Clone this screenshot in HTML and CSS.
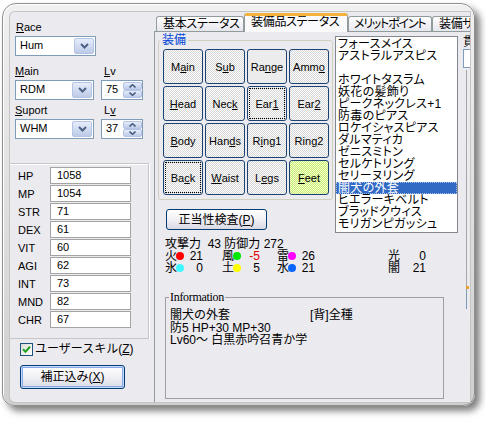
FILE: index.html
```html
<!DOCTYPE html>
<html lang="ja">
<head>
<meta charset="utf-8">
<title>Equip</title>
<link rel="stylesheet" href="styles.css">
</head>
<body>
<div class="window">
 <div class="client">
  <div class="side">
   <div class="lbl l1"><u>R</u>ace</div>
   <div class="combo race"><span class="val">Hum</span><span class="ddb"><svg width="9" height="6" viewBox="0 0 9 6"><path d="M1 1 L4.5 4.5 L8 1" fill="none" stroke="#4d6185" stroke-width="2"/></svg></span></div>
   <div class="lblrow m9"><span class="lbl a"><u>M</u>ain</span><span class="lbl"><u>L</u>v</span></div>
   <div class="ctlrow">
    <div class="combo job"><span class="val">RDM</span><span class="ddb"><svg width="9" height="6" viewBox="0 0 9 6"><path d="M1 1 L4.5 4.5 L8 1" fill="none" stroke="#4d6185" stroke-width="2"/></svg></span></div>
    <div class="spin"><span class="val">75</span><span class="spinbtns"><span><svg width="7" height="4" viewBox="0 0 7 4"><path d="M0.5 3.5 L3.5 0.7 L6.5 3.5" fill="none" stroke="#4d6185" stroke-width="1.6"/></svg></span><span><svg width="7" height="4" viewBox="0 0 7 4"><path d="M0.5 0.5 L3.5 3.3 L6.5 0.5" fill="none" stroke="#4d6185" stroke-width="1.6"/></svg></span></span></div>
   </div>
   <div class="lblrow m4"><span class="lbl a"><u>S</u>uport</span><span class="lbl">L<u>v</u></span></div>
   <div class="ctlrow">
    <div class="combo job"><span class="val">WHM</span><span class="ddb"><svg width="9" height="6" viewBox="0 0 9 6"><path d="M1 1 L4.5 4.5 L8 1" fill="none" stroke="#4d6185" stroke-width="2"/></svg></span></div>
    <div class="spin"><span class="val">37</span><span class="spinbtns"><span><svg width="7" height="4" viewBox="0 0 7 4"><path d="M0.5 3.5 L3.5 0.7 L6.5 3.5" fill="none" stroke="#4d6185" stroke-width="1.6"/></svg></span><span><svg width="7" height="4" viewBox="0 0 7 4"><path d="M0.5 0.5 L3.5 3.3 L6.5 0.5" fill="none" stroke="#4d6185" stroke-width="1.6"/></svg></span></span></div>
   </div>
   <div class="stats">
    <div class="srow"><span class="sl">HP</span><span class="sv">1058</span></div>
    <div class="srow"><span class="sl">MP</span><span class="sv">1054</span></div>
    <div class="srow"><span class="sl">STR</span><span class="sv">71</span></div>
    <div class="srow"><span class="sl">DEX</span><span class="sv">61</span></div>
    <div class="srow"><span class="sl">VIT</span><span class="sv">60</span></div>
    <div class="srow"><span class="sl">AGI</span><span class="sv">62</span></div>
    <div class="srow"><span class="sl">INT</span><span class="sv">73</span></div>
    <div class="srow"><span class="sl">MND</span><span class="sv">82</span></div>
    <div class="srow"><span class="sl">CHR</span><span class="sv">67</span></div>
   </div>
   <div class="chk"><span class="box"><svg width="9" height="9" viewBox="0 0 9 9"><path d="M1 4.2 L3.5 6.7 L8 1.8" fill="none" stroke="#21a121" stroke-width="2"/></svg></span><span>ユーザースキル(<u>Z</u>)</span></div>
   <button class="xpbtn def">補正込み(<u>X</u>)</button>
  </div>
  <div class="tabarea">
   <div class="tabs">
    <div class="tab t1">基本ステータス</div>
    <div class="tab sel">装備品ステータス</div>
    <div class="tab t3">メリットポイント</div>
    <div class="tab t4">装備サマリー</div>
   </div>
   <div class="panel">
    <div class="pmain">
     <div class="toprow">
      <div class="eqcol">
       <fieldset class="eq">
        <legend>装備</legend>
        <div class="grid">
         <div class="eb">M<u>a</u>in</div>
         <div class="eb">S<u>u</u>b</div>
         <div class="eb plain">Ra<u>n</u>ge</div>
         <div class="eb">Amm<u>o</u></div>
         <div class="eb"><u>H</u>ead</div>
         <div class="eb">Nec<u>k</u></div>
         <div class="eb focus">Ear<u>1</u></div>
         <div class="eb">Ear<u>2</u></div>
         <div class="eb"><u>B</u>ody</div>
         <div class="eb">Han<u>d</u>s</div>
         <div class="eb">R<u>i</u>ng1</div>
         <div class="eb">Rin<u>g</u>2</div>
         <div class="eb focus">Ba<u>c</u>k</div>
         <div class="eb"><u>W</u>aist</div>
         <div class="eb">L<u>e</u>gs</div>
         <div class="eb feet"><u>F</u>eet</div>
        </div>
       </fieldset>
       <button class="xpbtn chkbtn">正当性検査(<u>P</u>)</button>
      </div>
      <div class="list">
       <div>フォースメイス</div>
       <div>アストラルアスピス</div>
       <div></div>
       <div>ホワイトタスラム</div>
       <div>妖花の髪飾り</div>
       <div>ピークネックレス+1</div>
       <div>防毒のピアス</div>
       <div>ロケイシャスピアス</div>
       <div>ダルマティカ</div>
       <div>ゼニスミトン</div>
       <div>セルケトリング</div>
       <div>セリーヌリング</div>
       <div class="s">闇犬の外套</div>
       <div>ヒエラーキベルト</div>
       <div>ブラッドクウィス</div>
       <div>モリガンピガッシュ</div>
      </div>
     </div>
     <div class="atk">攻撃力  43 防御力 272</div>
     <div class="elems">
      <div class="el"><span class="k">火</span><span class="d fire"></span><span class="n">21</span></div>
      <div class="el"><span class="k">風</span><span class="d wind"></span><span class="n neg">-5</span></div>
      <div class="el"><span class="k">雷</span><span class="d thun"></span><span class="n">26</span></div>
      <div class="el"><span class="k">光</span><span class="d light"></span><span class="n">0</span></div>
      <div class="el"><span class="k">氷</span><span class="d ice"></span><span class="n">0</span></div>
      <div class="el"><span class="k">土</span><span class="d earth"></span><span class="n">5</span></div>
      <div class="el"><span class="k">水</span><span class="d water"></span><span class="n">21</span></div>
      <div class="el"><span class="k">闇</span><span class="d dark"></span><span class="n">21</span></div>
     </div>
     <fieldset class="info">
      <legend>Information</legend>
      <div class="infobody">
       <div class="r1"><span class="nm">闇犬の外套</span><span>[背]全種</span></div>
       <div>防5 HP+30 MP+30</div>
       <div>Lv60～ 白黒赤吟召青か学</div>
      </div>
     </fieldset>
    </div>
    <div class="pside">
     <div class="plbl">貫</div>
     <div class="ptxt"></div>
     <div class="pline"></div>
     <div class="pmark"></div>
     <div class="pblue"></div>
    </div>
   </div>
  </div>
 </div>
</div>
</body>
</html>
```

FILE: styles.css
```css
* { box-sizing: border-box; }
html, body { margin: 0; padding: 0; background: #fff; }
body {
  font-family: "Liberation Sans", "Noto Sans CJK JP", sans-serif;
  font-size: 11px;
  color: #000;
  width: 486px;
  height: 422px;
  overflow: hidden;
}
u { text-decoration: underline; text-underline-offset: 1px; }

.window {
  width: 473px;
  height: 403px;
  margin: 3px 0 0 2px;
  border: 1px solid #8f8f8f;
  border-radius: 14px 14px 12px 12px;
  padding: 8px 4px 3px 7px;
  background: linear-gradient(#f0f0f0, #cfcfcf);
  box-shadow: 5px 5px 7px rgba(0, 0, 0, 0.5), inset 1px 1px 0 #fff;
}
.client {
  display: flex;
  width: 460px;
  height: 390px;
  background: #ebeaef;
  border-radius: 5px 0 0 5px;
  overflow: hidden;
  box-shadow: 0 0 0 1px #c4c4c4;
}

/* left side */
.side {
  width: 144px;
  flex: none;
  padding: 9px 0 0 5px;
  display: flex;
  flex-direction: column;
  align-items: flex-start;
}
.lbl { line-height: 13px; height: 13px; }
.l1 { margin-left: 1px; }
.combo {
  margin-top: 2px;
  height: 20px;
  border: 1px solid #7f9db9;
  background: #fff;
  display: flex;
}
.combo .val { flex: 1; padding-left: 4px; line-height: 17px; }
.race { width: 81px; }
.job { width: 79px; }
.ddb {
  width: 20px;
  margin: 1px;
  border: 1px solid #b4c4e4;
  border-radius: 2px;
  background: linear-gradient(#e6edfb, #bdcbe8);
  display: flex;
  align-items: center;
  justify-content: center;
}
.lblrow { display: flex; }
.lblrow .a { width: 89px; }
.m9 { margin-top: 9px; }
.m4 { margin-top: 4px; }
.ctlrow { display: flex; gap: 7px; margin-top: 2px; }
.ctlrow .combo { margin-top: 0; }
.spin {
  width: 42px;
  height: 20px;
  border: 1px solid #7f9db9;
  background: #fff;
  display: flex;
}
.spin .val { flex: 1; padding-left: 4px; line-height: 17px; }
.spinbtns {
  width: 19px;
  margin: 1px 0;
  display: flex;
  flex-direction: column;
}
.spinbtns span {
  flex: 1;
  border: 1px solid #b4c4e4;
  border-radius: 2px;
  background: linear-gradient(#e6edfb, #bdcbe8);
  display: flex;
  align-items: center;
  justify-content: center;
}

.stats {
  margin: 24px 0 0 -5px;
  width: 139px;
  border: 1px solid #c6c5ca;
  border-left: 0;
  padding: 3px 0 10px 0;
  box-shadow: inset 0 1px 0 #fff, 1px 0 0 #fff;
}
.srow { display: flex; height: 17px; align-items: center; }
.srow + .srow { margin-top: 1px; }
.sl { width: 40px; padding-left: 8px; }
.sv {
  width: 81px;
  height: 17px;
  border: 1px solid #a3a3a3;
  background: #fff;
  padding-left: 6px;
  line-height: 15px;
}

.chk {
  display: flex;
  align-items: center;
  margin: 4px 0 0 5px;
  height: 13px;
  font-size: 12px;
  line-height: 13px;
}
.box {
  width: 13px;
  height: 13px;
  border: 1px solid #1c5180;
  background: linear-gradient(135deg, #dcdcd7, #fff);
  margin-right: 2px;
  display: flex;
  align-items: center;
  justify-content: center;
}

.xpbtn {
  font-family: "Liberation Sans", "Noto Sans CJK JP", sans-serif;
  font-size: 12px;
  color: #000;
  border: 1px solid #003c74;
  border-radius: 3px;
  background: linear-gradient(#ffffff 0%, #f2f2f6 45%, #d9dae4 100%);
  padding: 0;
  line-height: 12px;
}
.def {
  margin: 9px 0 0 5px;
  width: 105px;
  height: 24px;
  box-shadow: inset 0 0 0 1px #c6d9fb, inset 0 0 0 2px #88a9e8;
}

/* tab area */
.tabarea {
  flex: 1;
  display: flex;
  flex-direction: column;
  min-width: 0;
}
.tabs {
  height: 19px;
  display: flex;
  align-items: flex-end;
  padding-left: 2px;
  flex: none;
}
.tab {
  height: 15px;
  border: 1px solid #919b9c;
  border-bottom: 0;
  border-radius: 3px 3px 0 0;
  background: linear-gradient(#ffffff, #e6e6ee);
  font-size: 12px;
  line-height: 14px;
  padding-left: 6px;
  white-space: nowrap;
  overflow: hidden;
  flex: none;
  font-feature-settings: "palt";
  letter-spacing: -0.3px;
}
.t1 { width: 88px; }
.t3 { width: 84px; padding-left: 5px; letter-spacing: -1.2px; }
.t4 { width: 60px; }
.tab.sel {
  width: 104px;
  height: 19px;
  margin-bottom: -1px;
  border-top: 3px solid #f5b33c;
  background: #fafafc;
  position: relative;
  z-index: 1;
  line-height: 13px;
}

.panel {
  flex: 1;
  border-top: 1px solid #919b9c;
  border-left: 1px solid #919b9c;
  display: flex;
  min-height: 0;
}
.pmain {
  width: 303px;
  flex: none;
  display: flex;
  flex-direction: column;
}
.toprow { display: flex; align-items: flex-start; }
.eqcol { display: flex; flex-direction: column; align-items: flex-start; }

fieldset.eq {
  margin: 2px 0 0 3px;
  padding: 3px 3px 4px 4px;
  border: 1px solid #d0d0bf;
  border-radius: 3px;
  min-width: 0;
}
fieldset.eq legend {
  padding: 0 2px;
  margin-left: -3px;
  color: #0046d5;
  font-size: 12px;
  line-height: 12px;
}
.grid {
  display: grid;
  grid-template-columns: repeat(4, 40px);
  grid-auto-rows: 35px;
  gap: 2px;
}
.eb {
  border: 1px solid #1a4374;
  border-radius: 3px;
  background: repeating-conic-gradient(#ffffff 0 25%, #d6d6d6 0 50%) 0 0 / 2px 2px;
  display: flex;
  align-items: center;
  justify-content: center;
  font-size: 11px;
}
.eb.plain { background: #ececec; }
.eb.feet { background: repeating-conic-gradient(#f8ffc8 0 25%, #c6ee7a 0 50%) 0 0 / 2px 2px; }
.eb.focus { outline: 1px dotted #000; outline-offset: -3px; }

.chkbtn {
  margin: 9px 0 0 11px;
  width: 101px;
  height: 21px;
}

.list {
  margin: 4px 0 0 2px;
  width: 123px;
  height: 197px;
  border: 1px solid #828790;
  background: #fff;
  padding-top: 1px;
  font-size: 12px;
  line-height: 12px;
  overflow: hidden;
  flex: none;
}
.list div { height: 12px; padding-left: 2px; white-space: nowrap; font-feature-settings: "palt"; letter-spacing: 0.3px; }
.list .s { background: #316ac5; color: #fff; outline: 1px dotted #a9c0ea; outline-offset: -1px; }

.atk {
  margin: 5px 0 0 10px;
  font-size: 12px;
  line-height: 12px;
  white-space: pre;
}
.elems {
  margin-left: 10px;
  display: grid;
  grid-template-columns: 57px 55px 111px 40px;
  grid-auto-rows: 12px;
  font-size: 12px;
  line-height: 12px;
}
.el { display: flex; align-items: center; }
.el .k { width: 12px; }
.el .d { width: 8px; height: 8px; border-radius: 50%; margin-left: -1px; }
.el .n { width: 19px; text-align: right; }
.el .neg { color: #e00000; }
.fire { background: #ff0000; }
.wind { background: #00e800; }
.thun { background: #ff00ff; }
.light { background: transparent; }
.ice { background: #3ff8ff; }
.earth { background: #ffff00; }
.water { background: #0a64ff; }
.dark { background: transparent; }

fieldset.info {
  margin: 17px 0 0 10px;
  width: 279px;
  padding: 6px 4px 0 4px;
  border: 1px solid #a0a0a0;
  min-width: 0;
}
fieldset.info legend {
  font-family: "Liberation Serif", serif;
  font-size: 12px;
  line-height: 12px;
  padding: 0 1px;
  margin-left: -1px;
  letter-spacing: -0.3px;
}
.infobody { height: 89px; font-size: 12px; line-height: 12px; }
.r1 { display: flex; margin-bottom: 1px; }
.r1 .nm { width: 140px; }

.pside { margin-left: 5px; width: 20px; flex: none; padding-top: 4px; }
.plbl { font-size: 12px; line-height: 13px; height: 13px; }
.ptxt { height: 19px; width: 20px; border: 1px solid #7f9db9; background: #fff; }
.pline { margin: 2px 0 0 3px; width: 1px; height: 216px; background: #a7a6aa; }
.pmark { margin-left: 3px; width: 3px; height: 3px; background: #f0a030; }
.pblue { margin-left: 3px; width: 1px; height: 20px; background: #7f9db9; }
```
